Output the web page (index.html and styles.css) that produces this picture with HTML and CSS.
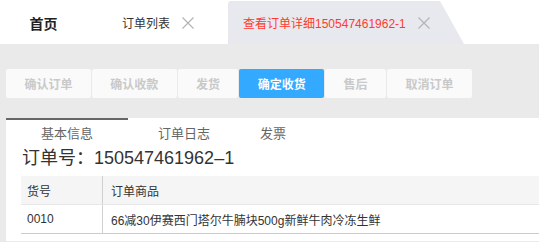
FILE: index.html
```html
<!DOCTYPE html>
<html lang="zh-CN">
<head>
    <meta charset="UTF-8">
    <title>查看订单详细</title>
    <link rel="stylesheet" href="styles.css">
</head>
<body>
    <!-- 顶部标签栏 -->
    <div class="tab-bar">
        <div class="tab tab-home">首页</div>
        <div class="tab">
            <span>订单列表</span>
            <svg class="close" width="12" height="12" viewBox="0 0 12 12"><path d="M0.5 0.5 L11.5 11.5 M11.5 0.5 L0.5 11.5" stroke="#b4b4b4" stroke-width="1.2" fill="none"/></svg>
        </div>
        <div class="tab tab-active">
            <span>查看订单详细150547461962-1</span>
            <svg class="close" width="12" height="12" viewBox="0 0 12 12"><path d="M0.5 0.5 L11.5 11.5 M11.5 0.5 L0.5 11.5" stroke="#b4b4b4" stroke-width="1.2" fill="none"/></svg>
        </div>
    </div>

    <div class="main">
        <!-- 操作按钮 -->
        <div class="actions">
            <button class="action-btn">确认订单</button>
            <button class="action-btn">确认收款</button>
            <button class="action-btn">发货</button>
            <button class="action-btn current">确定收货</button>
            <button class="action-btn">售后</button>
            <button class="action-btn">取消订单</button>
        </div>

        <!-- 详情面板 -->
        <div class="panel">
            <div class="sub-tabs">
                <div class="sub-tab sub-tab-on">基本信息</div>
                <div class="sub-tab sub-tab-log">订单日志</div>
                <div class="sub-tab sub-tab-bill">发票</div>
            </div>
            <div class="order-no">订单号：150547461962–1</div>
            <div class="table-wrap">
                <table class="goods">
                    <tr>
                        <th class="col-code">货号</th>
                        <th>订单商品</th>
                    </tr>
                    <tr>
                        <td class="col-code">0010</td>
                        <td>66减30伊赛西门塔尔牛腩块500g新鲜牛肉冷冻生鲜</td>
                    </tr>
                </table>
            </div>
        </div>
    </div>
</body>
</html>
```
FILE: styles.css
```css
body {
    margin: 0;
    font-family: "Liberation Sans", "Noto Sans CJK SC", sans-serif;
    color: #333;
    background: #eaeaea;
    width: 539px;
    height: 242px;
    overflow: hidden;
}
.tab-bar {
    display: flex;
    align-items: flex-end;
    height: 44px;
    background: #ffffff;
}
.tab {
    display: flex;
    align-items: center;
    height: 43px;
    font-size: 12px;
    color: #333;
    padding: 0 34px 0 35px;
}
.tab .close {
    margin-left: 12px;
    margin-top: 1px;
}
.tab-home {
    width: 87px;
    padding: 0;
    justify-content: center;
    font-size: 14px;
    font-weight: bold;
    color: #222;
}
.tab-active {
    width: 236px;
    box-sizing: border-box;
    padding: 0 0 0 15px;
    background: #e8e9ef;
    color: #ff3a2f;
    border-top-left-radius: 3px;
    clip-path: polygon(0 0, 212px 0, 100% 100%, 0 100%);
}
.main {
    padding: 25px 0 0 6px;
}
.actions {
    display: flex;
    gap: 1px;
}
.action-btn {
    height: 29px;
    padding: 0 18.4px;
    border: none;
    border-radius: 2px;
    background: #fafafa;
    color: #c9c9c9;
    font-family: inherit;
    font-size: 12px;
    font-weight: bold;
}
.action-btn.current {
    background: #33a9ff;
    color: #ffffff;
}
.panel {
    margin-top: 20px;
    background: #ffffff;
    height: 123px;
    overflow: hidden;
}
.sub-tabs {
    display: flex;
    height: 31px;
    font-size: 13px;
    color: #666;
}
.sub-tab {
    text-align: center;
    line-height: 28px;
    border-top: 2px solid transparent;
}
.sub-tab-on {
    width: 122px;
    border-top-color: #666;
}
.sub-tab-log {
    width: 112px;
}
.sub-tab-bill {
    width: 66px;
}
.order-no {
    padding-left: 16px;
    font-size: 18px;
    line-height: 16px;
    height: 26px;
    padding-top: 1px;
}
.table-wrap {
    padding-left: 15px;
}
.goods {
    width: 100%;
    border-collapse: collapse;
    font-size: 12px;
    color: #333;
}
.goods th, .goods td {
    height: 28px;
    padding: 0 0 0 8px;
    text-align: left;
    font-weight: normal;
}
.goods th {
    background: #f5f5f5;
    border-bottom: 1px solid #e6e6e6;
}
.goods td {
    border-bottom: 1px solid #cccccc;
}
.goods .col-code {
    width: 75px;
    padding-left: 6px;
    border-right: 1px solid #d0d0d0;
}
```
